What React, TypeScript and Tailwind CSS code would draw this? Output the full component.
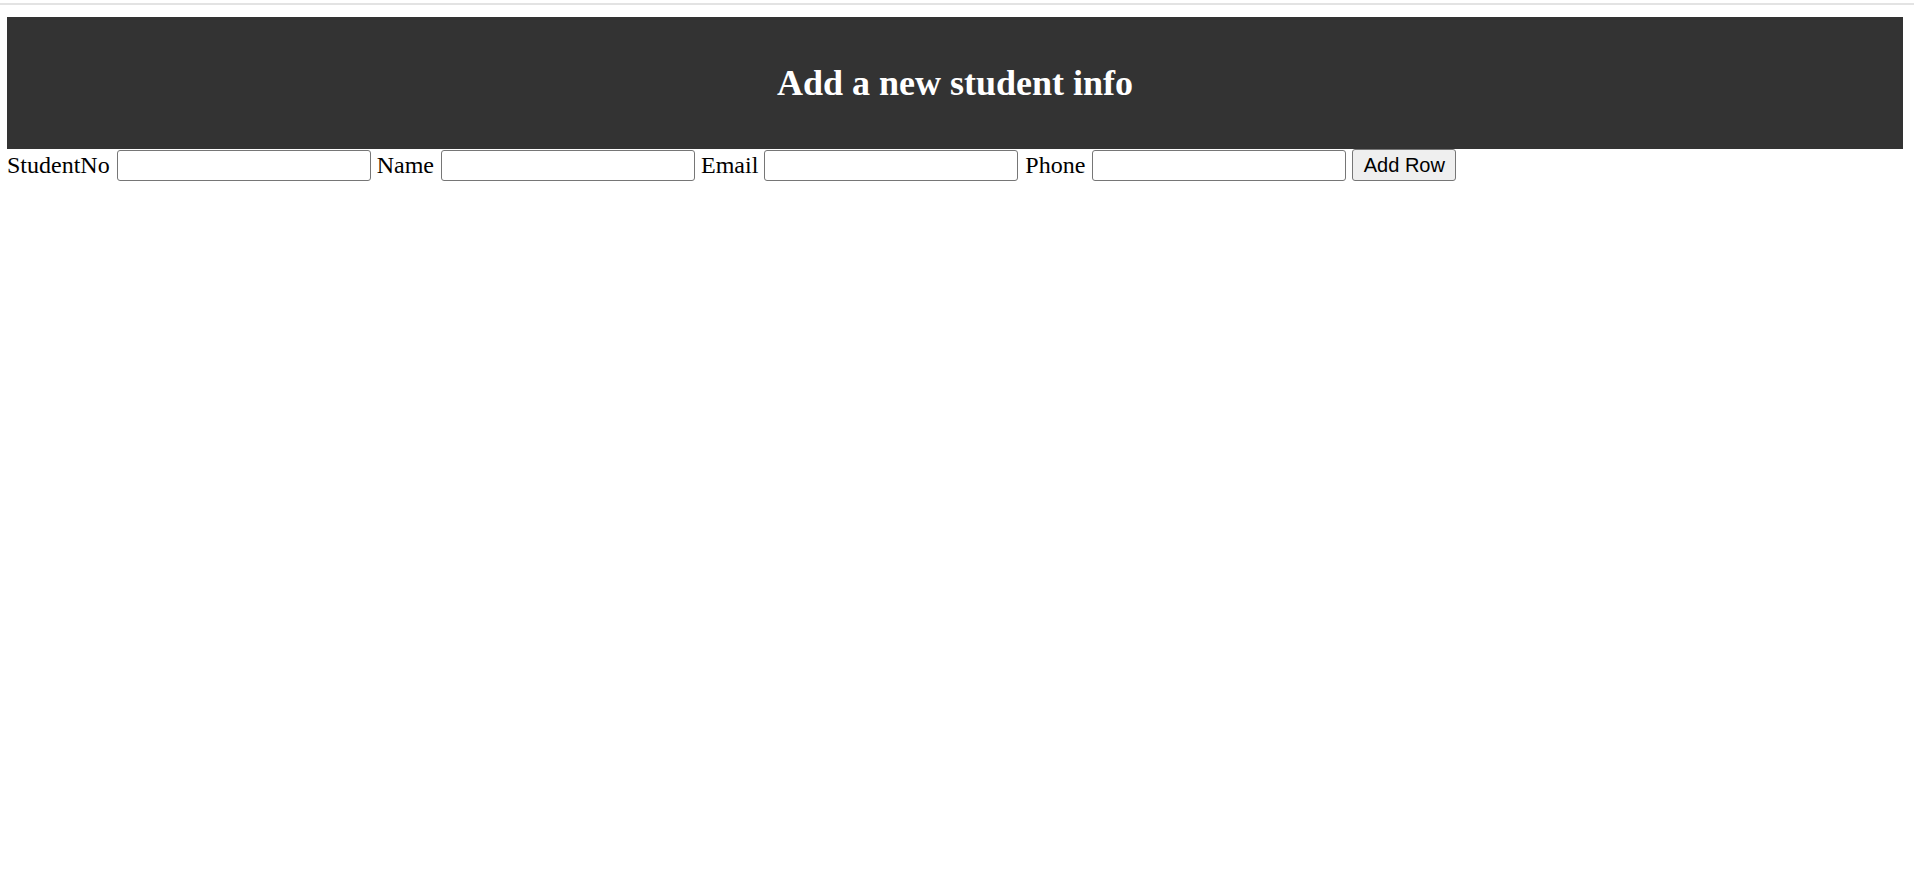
import React, { useState } from 'react';

const serif = { fontFamily: '"Liberation Serif", "Times New Roman", serif' };

const App: React.FC = () => {
  const [studentNo, setStudentNo] = useState('');
  const [name, setName] = useState('');
  const [email, setEmail] = useState('');
  const [phone, setPhone] = useState('');

  const inputClass =
    'h-[31px] w-[254px] rounded-[3px] border border-[#767676] bg-white px-[3px] text-[20px] outline-none';

  return (
    <div className="min-h-screen bg-white text-black font-['Liberation_Serif',serif]">
      {/* top rule */}
      <div className="pt-[3px]">
        <div className="h-[2px] w-full bg-[#e3e3e3]"></div>
      </div>

      <div className="pl-[7px] pt-[12px]">
        {/* Header */}
        <div className="flex h-[132px] w-[1896px] items-center justify-center bg-[#333333]">
          <h2 className="text-[36px] font-bold leading-none text-white">Add a new student info</h2>
        </div>

        {/* Form row */}
        <div className="flex h-[32px] items-center text-[24px]" style={serif}>
          <span>StudentNo</span>
          <input className={`ml-[7px] ${inputClass}`} value={studentNo} onChange={e => setStudentNo(e.target.value)} />
          <span className="ml-[6px]">Name</span>
          <input className={`ml-[7px] ${inputClass}`} value={name} onChange={e => setName(e.target.value)} />
          <span className="ml-[6px]">Email</span>
          <input className={`ml-[6px] ${inputClass}`} value={email} onChange={e => setEmail(e.target.value)} />
          <span className="ml-[7px]">Phone</span>
          <input className={`ml-[7px] ${inputClass}`} value={phone} onChange={e => setPhone(e.target.value)} />
          <button className="ml-[6px] h-[32px] w-[104px] rounded-[3px] border border-[#767676] bg-[#efefef] font-['Liberation_Sans',Arial,sans-serif] text-[20px] leading-none">
            Add Row
          </button>
        </div>
      </div>
    </div>
  );
};

export default App;
